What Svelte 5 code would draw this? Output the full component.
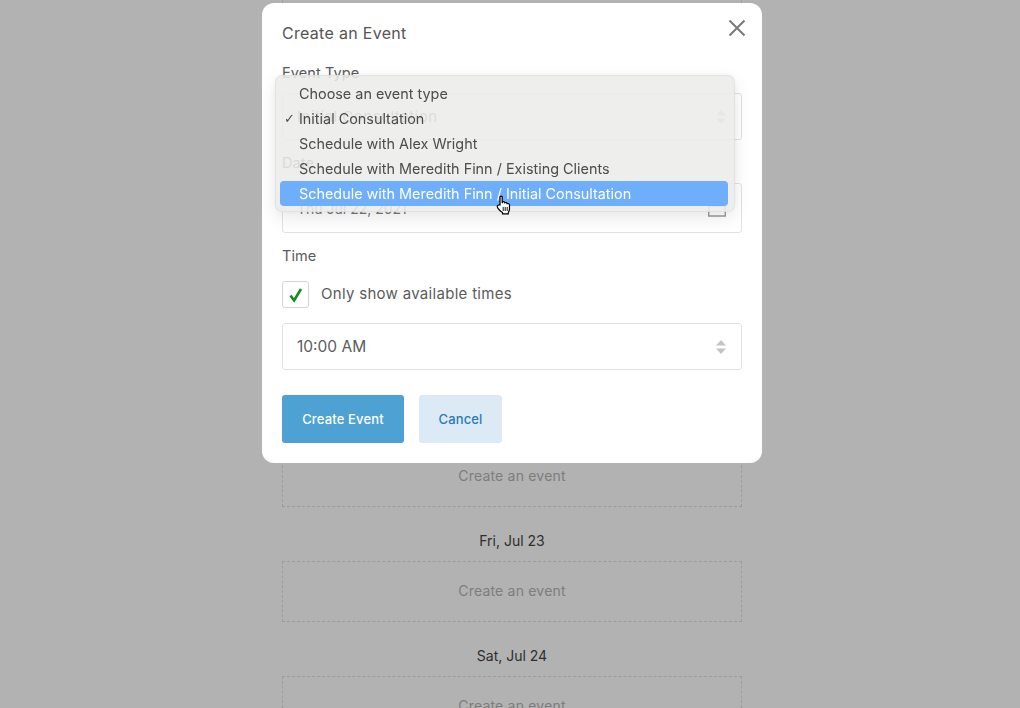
<script>
  const days = ["Sun, Jul 18", "Mon, Jul 19", "Tue, Jul 20", "Wed, Jul 21", "Fri, Jul 23", "Sat, Jul 24"];
  const options = [
    "Choose an event type",
    "Initial Consultation",
    "Schedule with Alex Wright",
    "Schedule with Meredith Finn / Existing Clients",
    "Schedule with Meredith Finn / Initial Consultation"
  ];
  let selected = 1;
  let hovered = 4;
</script>

<div class="page">
  <div class="days">
    <div class="slot">Create an event</div>
    {#each days as day}
      <h3>{day}</h3>
      <div class="slot">Create an event</div>
    {/each}
  </div>
</div>

<div class="overlay">
  <div class="modal">
    <header>
      <h2>Create an Event</h2>
      <button class="close" aria-label="Close">
        <svg width="18" height="18" viewBox="0 0 18 18"><path d="M1.500 1.500l15 15M16.500 1.500l-15 15" /></svg>
      </button>
    </header>

    <div class="label">Event Type</div>
    <div class="field select type">
      <span>Initial Consultation</span>
      <svg class="arrows" width="10" height="14" viewBox="0 0 10 14"><path d="M5 0l5 5.500H0zM5 14l5-5.500H0z" /></svg>
    </div>

    <div class="label spaced">Date</div>
    <div class="field date">
      <span>Thu Jul 22, 2021</span>
      <svg class="cal" width="18" height="18" viewBox="0 0 18 18"><path d="M.7 4.500h16.600v12.500H.7zM.7 7h16.600M5 1v3.500M13 1v3.500" /></svg>
    </div>

    <div class="label spaced">Time</div>
    <div class="check">
      <span class="box">
        <svg width="16" height="16" viewBox="0 0 16 16"><path d="M2.500 8.500l3.600 5L13 2" /></svg>
      </span>
      <span class="check-text">Only show available times</span>
    </div>
    <div class="field select time">
      <span>10:00 AM</span>
      <svg class="arrows" width="10" height="14" viewBox="0 0 10 14"><path d="M5 0l5 5.500H0zM5 14l5-5.500H0z" /></svg>
    </div>

    <div class="actions">
      <button class="primary">Create Event</button>
      <button class="secondary">Cancel</button>
    </div>

    <ul class="menu">
      {#each options as opt, i}
        <li class:hovered={i === hovered}>
          {#if i === selected}<span class="tick">✓</span>{/if}
          {opt}
        </li>
      {/each}
    </ul>

    <svg class="cursor" width="16" height="20" viewBox="0 0 16 20">
      <path d="M4 10V2.300C4 .8 6.200 .8 6.200 2.300V8l.3-1c1.300-.6 2.200-.2 2.300.8 1.100-.6 2.200-.2 2.300.9 1.200-.5 2.300.1 2.400 1.300v4c0 1.600-.6 2.600-1.200 3.500v1.300H6.500v-1.300C5.300 16.800 1.200 13.500 1.200 11.500c0-1.200 1.500-1.700 2.800-1.500z" />
      <path class="lines" d="M7.200 12v4M9.200 12v4M11.200 12v4" />
    </svg>
  </div>
</div>

<style>
  :global(body) {
    margin: 0;
    background: #fff;
    overflow: hidden;
  }
  .page {
    height: 708px;
    overflow: hidden;
    font-family: Inter, "Liberation Sans", sans-serif;
  }
  .days {
    width: 460px;
    margin: -14px 0 0 282px;
  }
  .days h3 {
    margin: 0;
    height: 54px;
    line-height: 68px;
    font-size: 14px;
    font-weight: 400;
    text-align: center;
    color: #444;
  }
  .slot {
    box-sizing: border-box;
    height: 61px;
    line-height: 57px;
    border: 1px dashed #e0e0e0;
    text-align: center;
    font-size: 14px;
    letter-spacing: 0.2px;
    color: #b4b4b4;
  }
  .overlay {
    position: fixed;
    inset: 0;
    background: rgba(0, 0, 0, 0.3);
  }
  .modal {
    position: absolute;
    top: 3px;
    left: 262px;
    box-sizing: border-box;
    width: 500px;
    height: 460px;
    padding: 0 20px;
    background: #fff;
    border-radius: 12px;
    font-family: Inter, "Liberation Sans", sans-serif;
    font-size: 15px;
    letter-spacing: 0.3px;
    color: #5b5b5b;
  }
  header {
    display: flex;
    justify-content: space-between;
    height: 60px;
  }
  h2 {
    margin: 0;
    padding-top: 20px;
    font-size: 16px;
    line-height: 20px;
    font-weight: 400;
    color: #555;
  }
  .close {
    padding: 0;
    margin: 16px -4px 0 0;
    width: 18px;
    height: 18px;
    border: 0;
    background: none;
  }
  .close path {
    fill: none;
    stroke: #7a7a7a;
    stroke-width: 2;
  }
  .label {
    height: 20px;
    line-height: 20px;
    margin-bottom: 10px;
    font-size: 14.500px;
    letter-spacing: 0.1px;
  }
  .label.spaced {
    margin-top: 13px;
  }
  .field {
    box-sizing: border-box;
    display: flex;
    align-items: center;
    justify-content: space-between;
    padding: 0 15px 0 14px;
    border: 1px solid #e2e2e2;
    border-radius: 3px;
  }
  .select {
    height: 47px;
  }
  .type {
    letter-spacing: 0.5px;
    color: #777;
  }
  .date {
    height: 50px;
    font-size: 14px;
    letter-spacing: 0;
    color: #777;
  }
  .time {
    margin-top: 15px;
    font-size: 15.500px;
    letter-spacing: 0;
  }
  .arrows path {
    fill: #c4c4c4;
  }
  .cal path {
    fill: none;
    stroke: #999;
    stroke-width: 1.400;
  }
  .check {
    display: flex;
    align-items: center;
    gap: 12px;
    margin-top: 15px;
    height: 27px;
  }
  .check-text {
    padding-bottom: 2px;
  }
  .box {
    box-sizing: border-box;
    display: flex;
    align-items: center;
    justify-content: center;
    width: 27px;
    height: 27px;
    border: 1px solid #d4d4d4;
    border-radius: 3px;
  }
  .box path {
    fill: none;
    stroke: #0f8f1d;
    stroke-width: 2.600;
  }
  .actions {
    display: flex;
    gap: 15px;
    margin-top: 25px;
  }
  .actions button {
    height: 48px;
    border: 0;
    border-radius: 3px;
    font-family: inherit;
    font-size: 13px;
    font-weight: 500;
    letter-spacing: 0.15px;
    padding: 0;
  }
  .primary {
    width: 122px;
    background: #4da1d3;
    color: #fff;
  }
  .secondary {
    width: 83px;
    background: #dceaf6;
    color: #2a7ab5;
  }
  .menu {
    position: absolute;
    top: 72px;
    left: 12.500px;
    box-sizing: border-box;
    width: 460px;
    height: 137px;
    margin: 0;
    padding: 5px 6px 0 4.500px;
    list-style: none;
    background: rgba(236, 235, 233, 0.87);
    backdrop-filter: blur(0.6px);
    border: 1px solid rgba(215, 215, 215, 0.5);
    border-radius: 7px;
    box-shadow: 0 6px 18px rgba(0, 0, 0, 0.09), 0 0 8px rgba(0, 0, 0, 0.04);
    font-family: Inter, "Liberation Sans", sans-serif;
    font-size: 14.400px;
    letter-spacing: 0;
    color: #4c4c4c;
  }
  .menu li {
    position: relative;
    height: 25px;
    line-height: 25px;
    padding-left: 19px;
    border-radius: 4px;
  }
  .menu li.hovered {
    background: #6eaefb;
    color: #fff;
  }
  .tick {
    position: absolute;
    left: 4px;
    font-size: 13px;
    font-family: "DejaVu Sans", sans-serif;
    font-weight: 700;
  }
  .cursor {
    position: absolute;
    left: 234px;
    top: 192px;
  }
  .cursor path {
    fill: #fff;
    stroke: #000;
    stroke-width: 1.200;
  }
  .cursor .lines {
    stroke-width: 0.900;
  }
</style>
